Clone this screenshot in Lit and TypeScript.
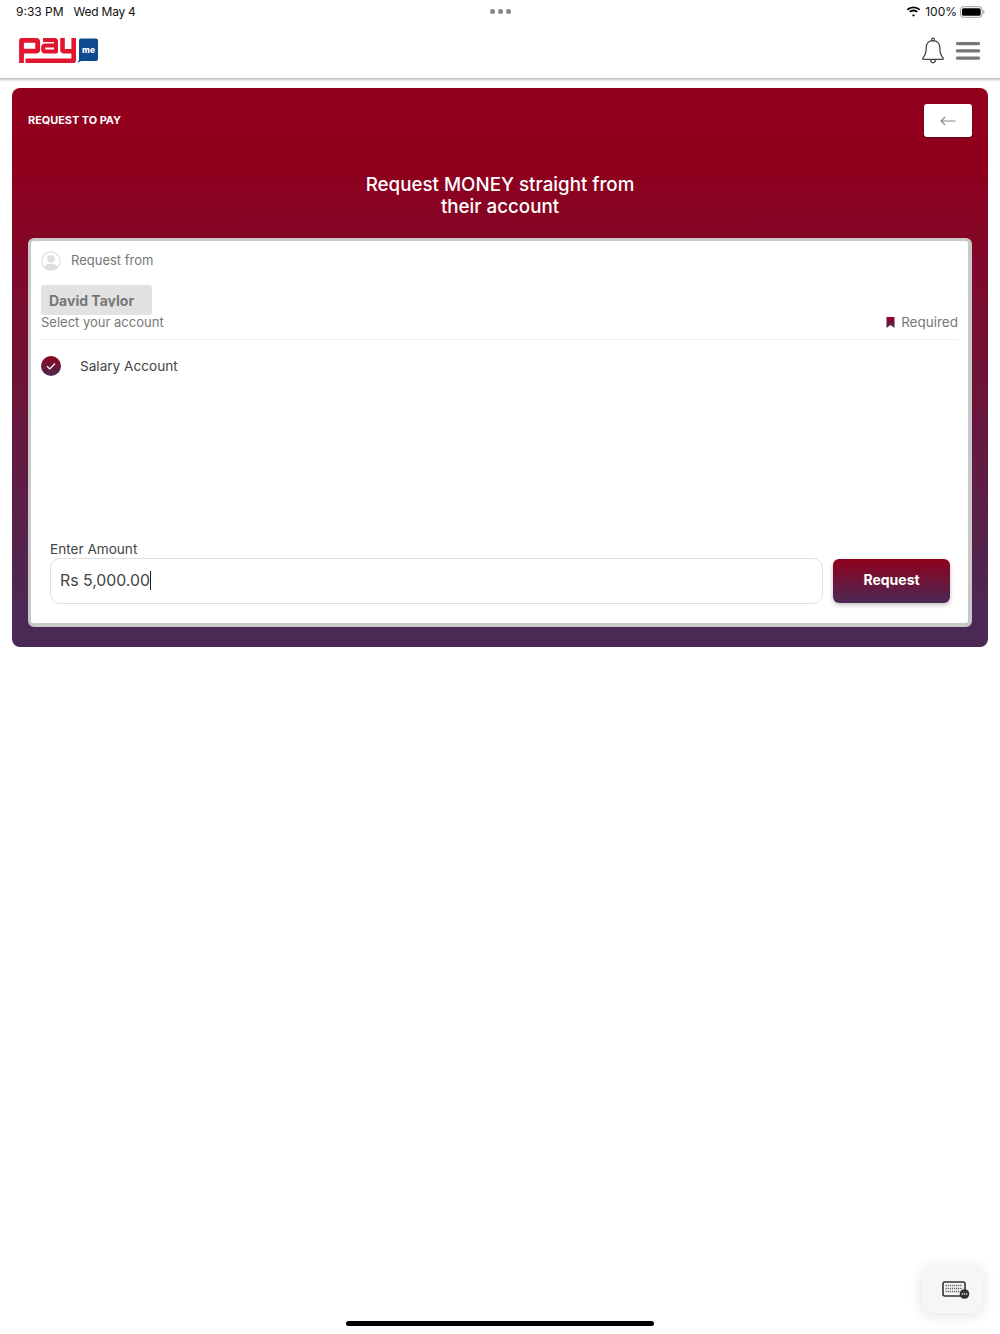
import { LitElement, html, css, svg } from "lit";
import { customElement } from "lit/decorators.js";

const logo = svg`<svg class="logo" width="80" height="26" viewBox="0 0 80 26">
  <g fill="none" stroke="#e2152e" stroke-linejoin="round">
    <path stroke-width="4.800" d="M2.500 25V2.400H17Q18.700 2.400 18.700 4V11.500Q18.700 13.200 17 13.200H4"/>
    <path stroke-width="4" d="M24 2H35.500Q37 2 37 3.500V13.500H26Q24.200 13.500 24.200 11.800V9.400Q24.200 7.600 26 7.600H36"/>
    <path stroke-width="4.600" d="M43.500 0V11.500Q43.500 13.200 45.200 13.200H54M54.700 0V22.800H6.500"/>
  </g>
  <path d="M60 2.500Q60 .5 62 .5H77Q79 .5 79 2.500V21Q79 23 77 23H62L58 25Q60 23 60 21Z" fill="#0f4a8f"/>
  <text x="69.500" y="15" text-anchor="middle" class="me">me</text>
</svg>`;

const wifi = svg`<svg width="15" height="11" viewBox="0 0 15 11"><path d="M7.500 2.200c2.100 0 4 .8 5.500 2.200l1.200-1.300A9.700 9.700 0 0 0 7.500.4 9.700 9.700 0 0 0 .8 3.100L2 4.400a7.900 7.900 0 0 1 5.500-2.200Zm0 3.200c1.200 0 2.300.4 3.200 1.200l1.200-1.300a6.500 6.500 0 0 0-8.800 0l1.200 1.300c.9-.8 2-1.200 3.200-1.200Zm0 3.100c-.6 0-1.100.2-1.500.6l1.500 1.600L9 8.900c-.4-.2-.9-.4-1.500-.4Z" fill="#000"/></svg>`;

const battery = svg`<svg width="25" height="12" viewBox="0 0 26 12"><rect x=".5" y=".5" width="22.500" height="11" rx="3" fill="none" stroke="#999"/><rect x="2" y="2" width="19.500" height="8" rx="1.600" fill="#000"/><path d="M24.200 4v4c.8-.3 1.300-1.100 1.300-2s-.5-1.700-1.300-2Z" fill="#999"/></svg>`;

const bell = svg`<svg width="24" height="28" viewBox="0 0 24 28"><path d="M12 3.600c-4.300 0-6.800 3.100-6.800 7.300 0 4.700-.9 7.300-3.200 10 -.5.700-.2 1.500.7 1.500h18.600c.9 0 1.200-.8.700-1.500-2.300-2.700-3.200-5.300-3.200-10 0-4.200-2.500-7.300-6.800-7.300Z" fill="none" stroke="#444" stroke-width="1.300"/><circle cx="12" cy="2.500" r="1.300" fill="none" stroke="#444" stroke-width="1.200"/><path d="M9.500 22.800c.2 2 1.200 3 2.500 3s2.300-1 2.500-3" fill="none" stroke="#444" stroke-width="1.300"/></svg>`;

const menu = svg`<svg width="24" height="20" viewBox="0 0 24 20"><g fill="#777"><rect y="1" width="24" height="3.200" rx="1.200"/><rect y="8.300" width="24" height="3.200" rx="1.200"/><rect y="15.600" width="24" height="3.200" rx="1.200"/></g></svg>`;

const arrow = svg`<svg width="16" height="10" viewBox="0 0 16 10"><path d="M15.500 5H1M5 1 1 5l4 4" fill="none" stroke="#888" stroke-width="1.100"/></svg>`;

const person = svg`<svg width="20" height="20" viewBox="0 0 20 20"><defs><clipPath id="c"><circle cx="10" cy="10" r="9.200"/></clipPath></defs><circle cx="10" cy="10" r="9.200" fill="#fff" stroke="#e0e0e0" stroke-width="1.200"/><g clip-path="url(#c)" fill="#dedede"><circle cx="10" cy="7.800" r="3.800"/><ellipse cx="10" cy="18" rx="7" ry="5.500"/></g></svg>`;

const bookmark = svg`<svg width="9" height="11" viewBox="0 0 9 11"><defs><linearGradient id="b" x1="0" y1="0" x2="0" y2="1"><stop offset="0" stop-color="#8f001c"/><stop offset="1" stop-color="#4b2a55"/></linearGradient></defs><path d="M.5 0h8v11L4.500 8 .5 11Z" fill="url(#b)"/></svg>`;

const check = svg`<svg width="20" height="20" viewBox="0 0 20 20"><defs><linearGradient id="g" x1="0" y1="0" x2="0" y2="1"><stop offset="0" stop-color="#8f001c"/><stop offset="1" stop-color="#4b2a55"/></linearGradient></defs><circle cx="10" cy="10" r="10" fill="url(#g)"/><path d="M6 10.300 8.800 13 14 7.500" fill="none" stroke="#fff" stroke-width="1.200"/></svg>`;

const keyboard = svg`<svg width="28" height="18" viewBox="0 0 28 18"><rect x="1" y="1" width="22" height="14" rx="2" fill="none" stroke="#333" stroke-width="1.600"/><g stroke="#666" stroke-width="1.500" stroke-dasharray="1.300 .8" fill="none"><path d="M3.500 4.500H20.500M3.500 7.500H20.500M3.500 10.500H18"/></g><circle cx="22.500" cy="13" r="4.800" fill="#333"/><g fill="#fff"><circle cx="20.400" cy="13" r=".8"/><circle cx="22.500" cy="13" r=".8"/><circle cx="24.600" cy="13" r=".8"/></g></svg>`;

@customElement("app-root")
export class AppRoot extends LitElement {
  static styles = css`
    :host {
      display: block;
      position: relative;
      width: 1000px;
      height: 1334px;
      background: #fff;
      overflow: hidden;
      font-family: Inter, "Liberation Sans", sans-serif;
      color: #333;
    }
    .status {
      height: 24px;
      box-sizing: border-box;
      display: grid;
      grid-template-columns: 1fr auto 1fr;
      align-items: center;
      padding: 0 15px 1px 16px;
      font-size: 12px;
      color: #111;
    }
    .time { display: flex; gap: 10px; }
    .date { letter-spacing: -0.25px; }
    .dots { display: flex; gap: 3px; }
    .dots i { width: 5px; height: 5px; border-radius: 50%; background: #8a8a8a; }
    .sys { display: flex; justify-content: flex-end; align-items: center; gap: 4px; }
    .sys span { margin-right: -1px; }
    .header {
      height: 54px;
      margin: 0 -4px;
      display: flex;
      align-items: center;
      justify-content: space-between;
      padding: 0 24px 0 23px;
      box-sizing: border-box;
      box-shadow: 0 3px 3px -2px rgba(0, 0, 0, 0.4);
      position: relative;
    }
    .logo { display: block; }
    .me { font: 800 8.500px Inter, sans-serif; fill: #fff; }
    .hicons { display: flex; align-items: center; gap: 11px; }
    .hicons svg { display: block; }
    .main { padding: 10px 12px 0; }
    .card {
      height: 559px;
      box-sizing: border-box;
      padding: 16px 16px 20px;
      border-radius: 8px;
      background: linear-gradient(180deg, #93001b 0%, #8e001e 15%, #4a2a55 95%);
      color: #fff;
      display: flex;
      flex-direction: column;
    }
    .top { display: flex; justify-content: space-between; align-items: center; height: 33px; }
    .title { font-size: 10.900px; font-weight: 700; padding-bottom: 1px; }
    .back {
      width: 48px;
      height: 33px;
      background: #fff;
      border-radius: 3px;
      display: flex;
      align-items: center;
      justify-content: center;
      box-shadow: 0 1px 2px rgba(0, 0, 0, 0.3);
    }
    h1 {
      margin: 37px 0 20px;
      font-size: 18.750px;
      line-height: 22px;
      font-weight: 500;
      text-align: center;
    }
    .panel {
      flex: 1;
      background: #fff;
      border: solid #c9c9c9;
      border-width: 3px 4px 4px 3px;
      border-radius: 6px;
      padding: 10px 10px 0;
      color: #777;
      display: flex;
      flex-direction: column;
      font-size: 13px;
    }
    .from { display: flex; align-items: center; gap: 10px; height: 20px; }
    .from svg { display: block; }
    .from span { margin-top: -2px; }
    .chip {
      margin-top: 14px;
      width: 111px;
      height: 30px;
      box-sizing: border-box;
      padding: 7px 8px 0;
      background: #e2e2e2;
      border-radius: 3px;
      font-size: 14px;
      line-height: 17px;
      font-weight: 700;
      color: #777;
    }
    .chip span { display: block; height: 15px; overflow: hidden; }
    .select {
      display: flex;
      justify-content: space-between;
      align-items: flex-start;
      height: 24px;
      line-height: 15px;
      border-bottom: 1px solid #f0f0f0;
    }
    .req { display: flex; align-items: center; gap: 6px; font-size: 13.500px; }
    .acct {
      display: flex;
      align-items: center;
      gap: 19px;
      margin-top: 16px;
      height: 20px;
      font-size: 13.600px;
      color: #444;
    }
    .acct svg { display: block; }
    .acct span { margin-top: -1px; }
    .amount { margin-top: auto; padding: 0 8px 19px 9px; }
    .label { font-size: 13.600px; line-height: 17px; color: #444; }
    .row { display: flex; gap: 10px; align-items: center; }
    .input {
      flex: 1;
      height: 46px;
      box-sizing: border-box;
      border: 1.500px solid #e0e0e0;
      border-radius: 10px;
      padding: 0 8px 2px 9px;
      display: flex;
      align-items: center;
      font-size: 15.800px;
      color: #444;
    }
    .caret { width: 1.500px; height: 19px; background: #222; }
    .btn {
      width: 117px;
      height: 44px;
      box-sizing: border-box;
      padding-bottom: 3px;
      border-radius: 6px;
      background: linear-gradient(180deg, #90001c, #4b2a55);
      color: #fff;
      font-size: 14px;
      font-weight: 700;
      display: flex;
      align-items: center;
      justify-content: center;
      box-shadow: 0 2px 4px rgba(0, 0, 0, 0.25);
    }
    .kbd {
      position: absolute;
      left: 922px;
      top: 1265px;
      width: 61px;
      height: 48px;
      border-radius: 10px;
      background: #f6f6f6;
      box-shadow: 0 2px 14px rgba(0, 0, 0, 0.12);
      display: flex;
      align-items: center;
      justify-content: center;
    }
    .kbd svg { margin: 2px 0 0 6px; }
    .home {
      position: absolute;
      left: 346px;
      top: 1321px;
      width: 308px;
      height: 5px;
      border-radius: 3px;
      background: #000;
    }
  `;

  render() {
    return html`
      <div class="status">
        <div class="time"><span>9:33 PM</span><span class="date">Wed May 4</span></div>
        <div class="dots"><i></i><i></i><i></i></div>
        <div class="sys">${wifi}<span>100%</span>${battery}</div>
      </div>
      <header class="header">
        ${logo}
        <div class="hicons">${bell}${menu}</div>
      </header>
      <main class="main">
        <section class="card">
          <div class="top">
            <div class="title">REQUEST TO PAY</div>
            <div class="back">${arrow}</div>
          </div>
          <h1>Request MONEY straight from<br />their account</h1>
          <div class="panel">
            <div class="from">${person}<span>Request from</span></div>
            <div class="chip"><span>David Taylor</span></div>
            <div class="select">
              <span>Select your account</span>
              <span class="req">${bookmark}Required</span>
            </div>
            <div class="acct">${check}<span>Salary Account</span></div>
            <div class="amount">
              <div class="label">Enter Amount</div>
              <div class="row">
                <div class="input">Rs 5,000.00<span class="caret"></span></div>
                <div class="btn">Request</div>
              </div>
            </div>
          </div>
        </section>
      </main>
      <div class="kbd">${keyboard}</div>
      <div class="home"></div>
    `;
  }
}
